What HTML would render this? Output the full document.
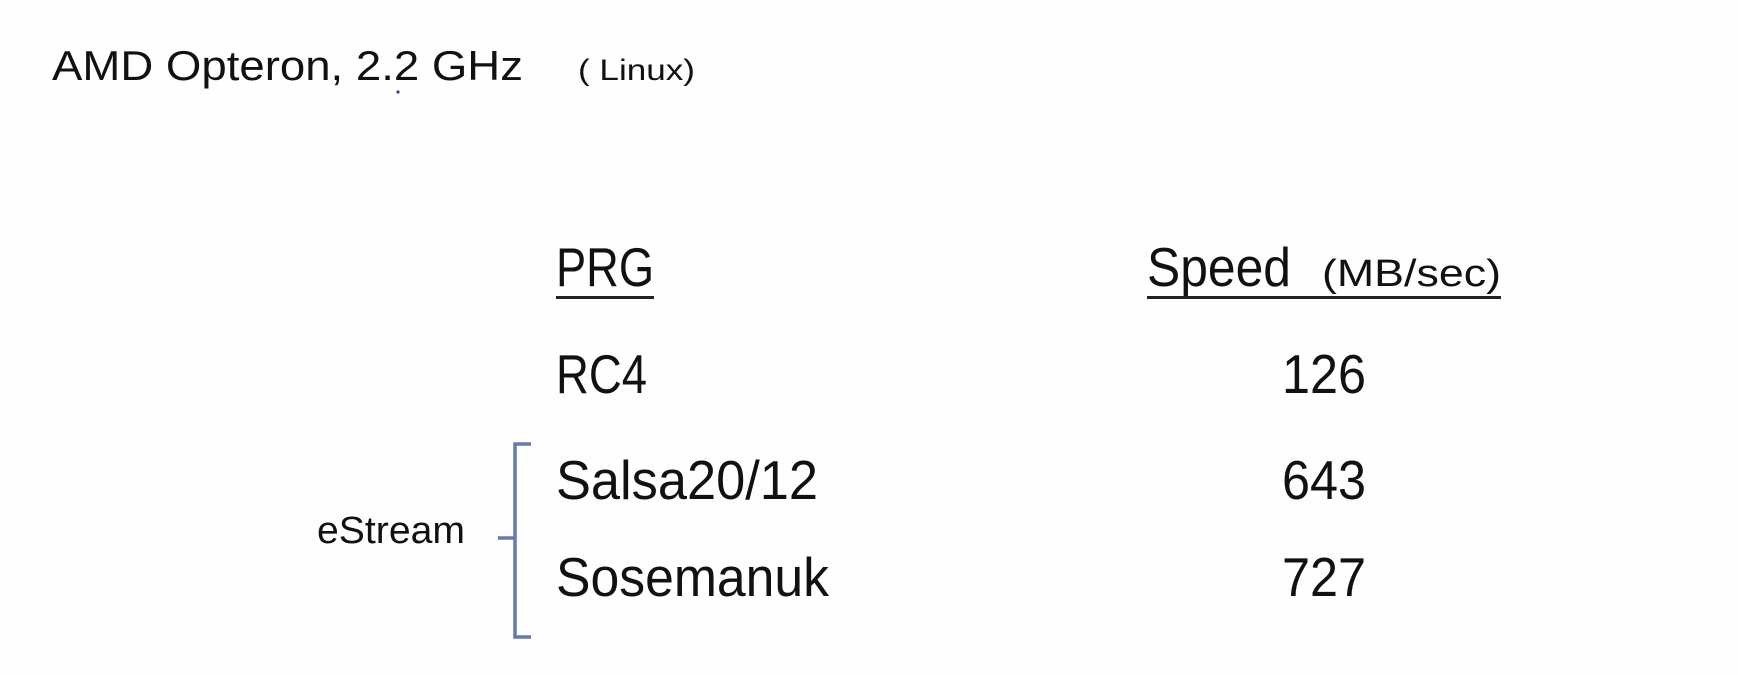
<!DOCTYPE html>
<html><head><meta charset="utf-8"><style>
html,body{margin:0;padding:0;background:#fff;}
svg{display:block;}
text{font-family:"Liberation Sans",sans-serif;fill:#111;}
</style></head><body>
<svg width="1738" height="675" viewBox="0 0 1738 675" xmlns="http://www.w3.org/2000/svg">
<rect width="1738" height="675" fill="#fefefe"/>
<text x="52" y="80" font-size="42" textLength="471" lengthAdjust="spacingAndGlyphs">AMD Opteron,  2.2 GHz</text>
<circle cx="398" cy="92" r="1.6" fill="#3a3aa0"/>
<text x="578" y="80" font-size="30" textLength="117" lengthAdjust="spacingAndGlyphs">( Linux)</text>

<text x="556" y="286" font-size="55" textLength="98" lengthAdjust="spacingAndGlyphs">PRG</text>
<rect x="556" y="296" width="98" height="3" fill="#222"/>
<text x="1147" y="286" font-size="55" textLength="144" lengthAdjust="spacingAndGlyphs">Speed</text>
<text x="1322" y="286" font-size="38" textLength="179" lengthAdjust="spacingAndGlyphs">(MB/sec)</text>
<rect x="1147" y="296" width="354" height="3" fill="#222"/>

<text x="556" y="393" font-size="55" textLength="91" lengthAdjust="spacingAndGlyphs">RC4</text>
<text x="1282" y="393" font-size="55" textLength="84" lengthAdjust="spacingAndGlyphs">126</text>

<text x="556" y="499" font-size="55" textLength="262" lengthAdjust="spacingAndGlyphs">Salsa20/12</text>
<text x="1282" y="499" font-size="55" textLength="84" lengthAdjust="spacingAndGlyphs">643</text>

<text x="556" y="596" font-size="55" textLength="273" lengthAdjust="spacingAndGlyphs">Sosemanuk</text>
<text x="1282" y="596" font-size="55" textLength="84" lengthAdjust="spacingAndGlyphs">727</text>

<text x="317" y="543" font-size="38" textLength="148" lengthAdjust="spacingAndGlyphs">eStream</text>

<path d="M531 444 H515 V637 H531 M515 538 H498" fill="none" stroke="#6679ad" stroke-width="3.5"/>
</svg>
</body></html>
